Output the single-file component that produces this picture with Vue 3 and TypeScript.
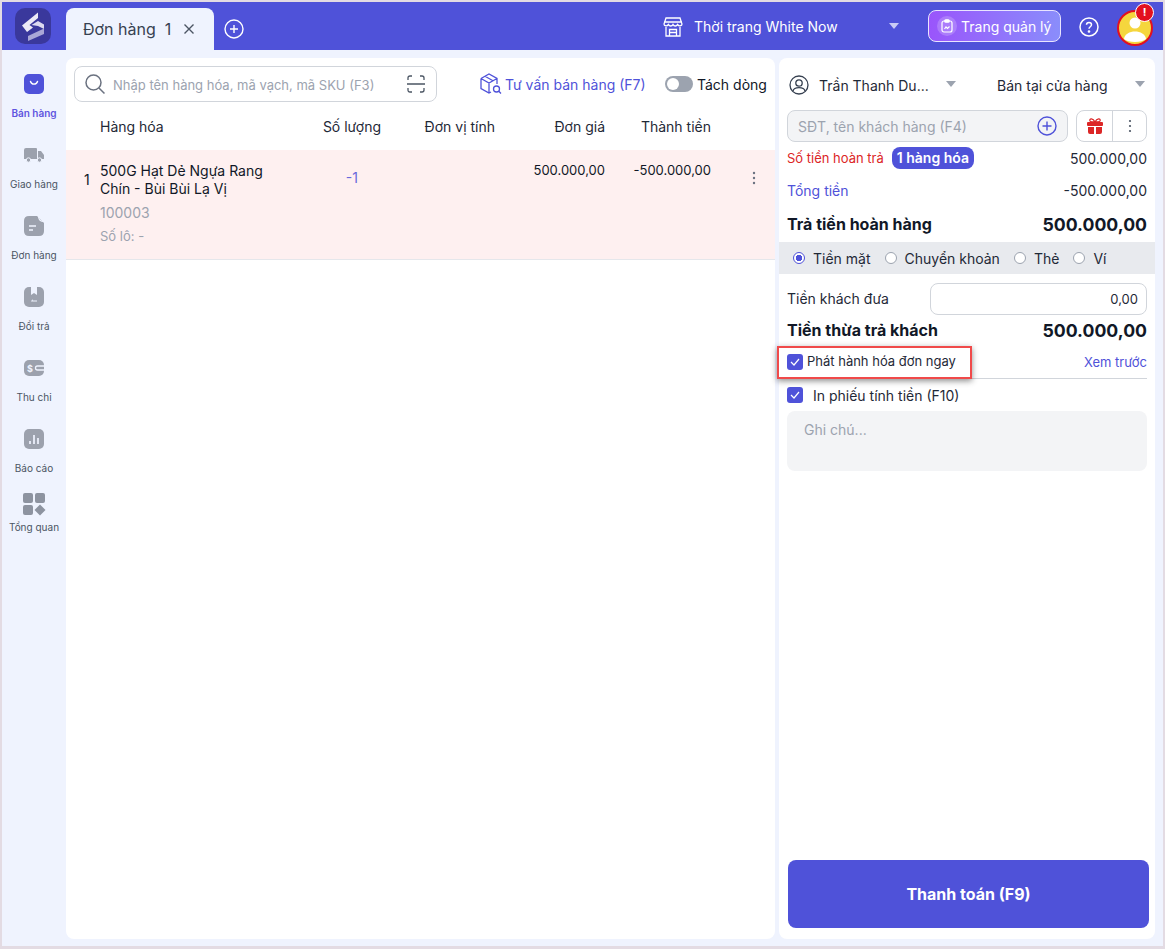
<script setup lang="ts">
interface NavItem { label: string; key: string; active?: boolean }
const nav: NavItem[] = [
  { label: 'Bán hàng', key: 'bag', active: true },
  { label: 'Giao hàng', key: 'truck' },
  { label: 'Đơn hàng', key: 'doc' },
  { label: 'Đổi trả', key: 'ret' },
  { label: 'Thu chi', key: 'wallet' },
  { label: 'Báo cáo', key: 'chart' },
]
const pays = ['Tiền mặt', 'Chuyển khoản', 'Thẻ', 'Ví']
</script>

<template>
  <div class="frame">
    <header class="topbar">
      <svg class="logo" width="36" height="36" viewBox="0 0 36 36">
        <rect width="36" height="36" rx="10" fill="#3a389c" />
        <path d="M7 17.500 L23 4.500 V10 L14.500 17 L18 19.500 L12 24 Z" fill="#eceaf6" />
        <path d="M16.500 17 L23 13 L29 16.500 L29 21 L23 18 Z" fill="#dcdaf0" />
        <path d="M13 28 L29 20.500 V26 L13 33 Z" fill="#a9a7d6" />
      </svg>
      <div class="tab">
        <span>Đơn hàng</span><span class="tab-n">1</span>
        <svg width="12" height="12" viewBox="0 0 12 12" class="tab-x"><path d="M1.500 1.500 L10.500 10.500 M10.500 1.500 L1.500 10.500" stroke="#4b5563" stroke-width="1.400" /></svg>
      </div>
      <svg class="add" width="20" height="20" viewBox="0 0 20 20" fill="none" stroke="#fff" stroke-width="1.400"><circle cx="10" cy="10" r="9" /><path d="M10 6 V14 M6 10 H14" /></svg>
      <div class="store">
        <svg width="20" height="21" viewBox="0 0 20 21" fill="none" stroke="#fff" stroke-width="1.300"><path d="M3 2 H17 L19 8 C19 10 16 10.500 14.500 8.500 C13.500 10.500 11 10.500 10 8.500 C9 10.500 6.500 10.500 5.500 8.500 C4 10.500 1 10 1 8 Z M3 11 V20 H17 V11 M6.500 20 V13.500 H13.500 V20 M6.500 16.500 H13.500 M1 6 H19" /></svg>
        <span class="store-name">Thời trang White Now</span>
        <i class="caret caret-light"></i>
      </div>
      <div class="manage">
        <span class="manage-ic">
          <svg width="12" height="14" viewBox="0 0 12 14" fill="none" stroke="#fff" stroke-width="1.200"><rect x="1" y="2" width="10" height="11" rx="2" /><rect x="3.800" y="0.800" width="4.400" height="2.400" rx="1" fill="#fff" /><path d="M3.500 10 L5 8 L6.500 9.500 L8.500 7.500" /></svg>
        </span>
        Trang quản lý
      </div>
      <svg class="help" width="20" height="20" viewBox="0 0 20 20" fill="none" stroke="#fff" stroke-width="1.500"><circle cx="10" cy="10" r="9" /><path d="M7.500 7.800 C7.500 4.800 12.500 4.800 12.500 7.800 C12.500 9.800 10 9.700 10 11.800" /><circle cx="10" cy="14.500" r="0.600" fill="#fff" /></svg>
      <div class="avatar">
        <svg width="36" height="36" viewBox="0 0 36 36">
          <circle cx="18" cy="18" r="17" fill="#f5d63d" stroke="#e3101f" stroke-width="2" />
          <circle cx="18" cy="13" r="5.500" fill="#fff" />
          <path d="M7 29 C8 19 28 19 29 29 C25 33 11 33 7 29 Z" fill="#fff" />
        </svg>
        <span class="avatar-badge">!</span>
      </div>
    </header>

    <div class="body">
      <nav class="sidenav">
        <div v-for="n in nav" :key="n.key" class="nav-item" :class="{ active: n.active }">
          <svg width="20" height="20" viewBox="0 0 20 20">
            <template v-if="n.key === 'bag'">
              <rect width="20" height="20" rx="5" fill="#4f52d9" />
              <path d="M6.500 7.500 C7.500 11 12.500 11 13.500 7.500" fill="none" stroke="#fff" stroke-width="1.400" stroke-linecap="round" />
            </template>
            <template v-else-if="n.key === 'truck'">
              <path d="M0 5 Q0 3 2 3 H12 Q13 3 13 4 V14 H0 Z M14 6 H17 L20 10 V14 H14 Z" fill="#9ca1ad" />
              <circle cx="4.500" cy="15" r="2.200" fill="#9ca1ad" stroke="#eff3fe" /><circle cx="15.500" cy="15" r="2.200" fill="#9ca1ad" stroke="#eff3fe" />
            </template>
            <template v-else-if="n.key === 'doc'">
              <path d="M5 0 H13 L20 7 V15 Q20 20 15 20 H5 Q0 20 0 15 V5 Q0 0 5 0 Z" fill="#9ca1ad" />
              <path d="M14.500 0.500 Q15 5.500 19.800 5.500" fill="none" stroke="#eff3fe" stroke-width="1.200" />
              <path d="M5 10 H12 M5 14 H9" stroke="#eff3fe" stroke-width="1.500" />
            </template>
            <template v-else-if="n.key === 'ret'">
              <rect width="20" height="20" rx="5" fill="#9ca1ad" />
              <path d="M7 0 H13 V8 L10 6 L7 8 Z" fill="#eff3fe" />
              <path d="M7.500 14 H13 M7.500 14 L9 12.800" stroke="#eff3fe" stroke-width="1" fill="none" />
            </template>
            <template v-else-if="n.key === 'wallet'">
              <rect y="2" width="20" height="16" rx="5" fill="#9ca1ad" />
              <text x="6" y="14" font-size="9" font-weight="700" fill="#eff3fe" text-anchor="middle" font-family="Inter">$</text>
              <path d="M20 8 H13.500 A2 2 0 0 0 13.500 12 H20" fill="none" stroke="#eff3fe" stroke-width="1.300" />
            </template>
            <template v-else>
              <rect width="20" height="20" rx="5" fill="#9ca1ad" />
              <path d="M6 15 V12 M10 15 V6 M14 15 V9" stroke="#eff3fe" stroke-width="1.700" />
            </template>
          </svg>
          <span>{{ n.label }}</span>
        </div>
        <div class="nav-item nav-last">
          <svg width="24" height="24" viewBox="0 0 24 24" fill="#8d93a0">
            <rect x="1" y="1" width="10" height="10" rx="2" /><rect x="13" y="1" width="10" height="10" rx="2" /><rect x="1" y="13" width="10" height="10" rx="2" />
            <path d="M18 12.500 L23.500 18 L18 23.500 L12.500 18 Z" />
          </svg>
          <span>Tổng quan</span>
        </div>
      </nav>

      <main class="left">
        <div class="toolbar">
          <div class="search">
            <svg width="22" height="22" viewBox="0 0 22 22" fill="none" stroke="#6b7280" stroke-width="1.500"><circle cx="9.500" cy="9.500" r="7.500" /><path d="M15 15 L20.500 20.500" /></svg>
            <span class="search-text">Nhập tên hàng hóa, mã vạch, mã SKU (F3)</span>
            <svg width="18" height="18" viewBox="0 0 18 18" fill="none" stroke="#4b5563" stroke-width="1.300"><path d="M1 5 V3 Q1 1 3 1 H5 M13 1 H15 Q17 1 17 3 V5 M17 13 V15 Q17 17 15 17 H13 M5 17 H3 Q1 17 1 15 V13 M0 9 H18" /></svg>
          </div>
          <div class="advise">
            <svg width="22" height="22" viewBox="0 0 22 22" fill="none" stroke="#4f52d9" stroke-width="1.300"><path d="M1 5.500 L9 1 L17 5.500 V11 M1 5.500 V15.500 L9 20 L11 19 M1 5.500 L9 10 L17 5.500 M9 10 V20 M5 3.300 L13 7.800" /><circle cx="16.500" cy="16" r="3" /><path d="M18.800 18.300 L21 20.500" /></svg>
            <span>Tư vấn bán hàng (F7)</span>
          </div>
          <div class="split">
            <span class="toggle"><i></i></span>
            <span>Tách dòng</span>
          </div>
        </div>

        <div class="grid grid-head">
          <div>Hàng hóa</div><div class="r">Số lượng</div><div class="r">Đơn vị tính</div><div class="r">Đơn giá</div><div class="r">Thành tiền</div><div></div>
        </div>

        <div class="grid row">
          <div class="name-cell">
            <span class="idx">1</span>
            <div class="name">500G Hạt Dẻ Ngựa Rang Chín - Bùi Bùi Lạ Vị</div>
            <div class="sku">100003</div>
            <div class="lot">Số lô: -</div>
          </div>
          <div class="r qty">-1</div>
          <div></div>
          <div class="r money">500.000,00</div>
          <div class="r money">-500.000,00</div>
          <div class="more">
            <svg width="4" height="14" viewBox="0 0 4 14" fill="#6b7280"><circle cx="2" cy="2" r="1.200" /><circle cx="2" cy="7" r="1.200" /><circle cx="2" cy="12" r="1.200" /></svg>
          </div>
        </div>
      </main>

      <aside class="right">
        <div class="selects">
          <svg width="20" height="20" viewBox="0 0 20 20" fill="none" stroke="#374151" stroke-width="1.300"><circle cx="10" cy="10" r="9" /><circle cx="10" cy="8" r="3.200" /><path d="M4 16 C5 11.500 15 11.500 16 16" /></svg>
          <span class="seller">Trần Thanh Du...</span>
          <i class="caret"></i>
          <span class="channel">Bán tại cửa hàng</span>
          <i class="caret"></i>
        </div>

        <div class="customer">
          <div class="cust-input">
            <span>SĐT, tên khách hàng (F4)</span>
            <svg width="20" height="20" viewBox="0 0 20 20" fill="none" stroke="#4f52d9" stroke-width="1.400"><circle cx="10" cy="10" r="9" /><path d="M10 5.500 V14.500 M5.500 10 H14.500" /></svg>
          </div>
          <div class="cust-btns">
            <span class="cbtn">
              <svg width="16" height="16" viewBox="0 0 16 16" fill="#dc2626"><rect x="0" y="4" width="16" height="4" rx="1" /><path d="M1 9 H7 V16 H3 Q1 16 1 14 Z M9 9 H15 V14 Q15 16 13 16 H9 Z" /><path d="M8 4 C6 0 2 0 3 3 Q3.500 4 8 4 C10 0 14 0 13 3 Q12.500 4 8 4" fill="none" stroke="#dc2626" stroke-width="1.300" /></svg>
            </span>
            <span class="cbtn cbtn-more">
              <svg width="4" height="14" viewBox="0 0 4 14" fill="#4b5563"><circle cx="2" cy="2" r="1.100" /><circle cx="2" cy="7" r="1.100" /><circle cx="2" cy="12" r="1.100" /></svg>
            </span>
          </div>
        </div>

        <div class="line refund">
          <span class="refund-l">Số tiền hoàn trả</span>
          <span class="pill">1 hàng hóa</span>
          <span class="val">500.000,00</span>
        </div>
        <div class="line total">
          <span class="blue">Tổng tiền</span>
          <span class="val">-500.000,00</span>
        </div>
        <div class="line strong s1">
          <span>Trả tiền hoàn hàng</span>
          <span class="big">500.000,00</span>
        </div>

        <div class="pay">
          <label v-for="(p, i) in pays" :key="p" class="pay-opt">
            <span class="radio" :class="{ on: i === 0 }"></span>{{ p }}
          </label>
        </div>

        <div class="line given">
          <span class="given-label">Tiền khách đưa</span>
          <span class="given-input">0,00</span>
        </div>
        <div class="line strong s2">
          <span>Tiền thừa trả khách</span>
          <span class="big">500.000,00</span>
        </div>

        <div class="invoice">
          <span class="check">
            <svg width="10" height="8" viewBox="0 0 10 8" fill="none" stroke="#fff" stroke-width="1.200"><path d="M1 4 L4 7 L9 1" /></svg>
          </span>
          <span class="inv-text">Phát hành hóa đơn ngay</span>
          <span class="preview">Xem trước</span>
          <div class="highlight"></div>
        </div>

        <div class="print">
          <span class="check">
            <svg width="10" height="8" viewBox="0 0 10 8" fill="none" stroke="#fff" stroke-width="1.200"><path d="M1 4 L4 7 L9 1" /></svg>
          </span>
          <span>In phiếu tính tiền (F10)</span>
        </div>

        <div class="note">Ghi chú...</div>

        <button class="paybtn">Thanh toán (F9)</button>
      </aside>
    </div>
  </div>
</template>

<style>
html, body { margin: 0; padding: 0; background: #e3dbe3; }
</style>

<style scoped>
.frame {
  box-sizing: border-box;
  width: 1165px;
  height: 949px;
  padding: 2px 2px 3px 2px;
  background: #e3dbe3;
  display: flex;
  flex-direction: column;
  font-family: Inter, "Noto Sans", sans-serif;
  font-size: 14px;
  color: #111827;
  overflow: hidden;
}
.topbar {
  height: 48px;
  flex: none;
  background: #4f52d9;
  display: flex;
  align-items: flex-start;
  position: relative;
}
.logo { margin: 6px 0 0 13px; flex: none; }
.tab {
  margin: 6px 0 0 15px;
  width: 148px;
  height: 42px;
  box-sizing: border-box;
  padding: 0 0 0 17px;
  background: #eff3fe;
  border-radius: 8px 8px 0 0;
  display: flex;
  align-items: center;
  font-size: 16px;
  color: #374151;
}
.tab-n { margin-left: 9px; }
.tab-x { margin-left: 12px; }
.add { margin: 17px 0 0 10px; flex: none; }
.store {
  margin: 13px 0 0 419px;
  height: 22px;
  display: flex;
  align-items: center;
  color: #fff;
  flex: none;
}
.store-name { margin-left: 11px; width: 195px; font-size: 14px; white-space: nowrap; }
.caret {
  display: inline-block;
  width: 0;
  height: 0;
  border-left: 5px solid transparent;
  border-right: 5px solid transparent;
  border-top: 6px solid #9ca3af;
  flex: none;
}
.selects .caret { margin-top: -2px; }
.caret-light { border-top-color: #c9cbf5; }
.manage {
  margin: 8px 0 0 29px;
  box-sizing: border-box;
  width: 133px;
  height: 32px;
  border: 1px solid #e9e4ff;
  border-radius: 8px;
  background: linear-gradient(90deg, #9a55fb, #8a8dfb);
  display: flex;
  align-items: center;
  padding-left: 8px;
  color: #fff;
  font-size: 14px;
  white-space: nowrap;
  flex: none;
}
.manage-ic {
  width: 20px;
  height: 20px;
  border-radius: 50%;
  background: rgba(255, 255, 255, 0.2);
  display: flex;
  align-items: center;
  justify-content: center;
  margin-right: 4px;
}
.help { margin: 15px 0 0 18px; flex: none; }
.avatar { margin: 8px 0 0 18px; position: relative; width: 36px; height: 36px; flex: none; }
.avatar-badge {
  position: absolute;
  left: 18px;
  top: -7px;
  width: 17px;
  height: 17px;
  border: 1.500px solid #fff;
  border-radius: 50%;
  background: #e3101f;
  color: #fff;
  font-size: 11px;
  font-weight: 700;
  line-height: 17px;
  text-align: center;
}
.body {
  flex: 1;
  min-height: 0;
  display: flex;
  background: #eff3fe;
  padding: 8px 8px 7px 0;
}
.sidenav { width: 64px; flex: none; display: flex; flex-direction: column; align-items: center; padding-top: 16px; }
.nav-item {
  display: flex;
  flex-direction: column;
  align-items: center;
  height: 71px;
  font-size: 10px;
  color: #4b5563;
  white-space: nowrap;
}
.nav-item svg { flex: none; }
.nav-item span { margin-top: 12px; line-height: 14px; }
.nav-item.active span { color: #5f55e0; font-weight: 600; }
.nav-last { margin-top: -8px; }
.nav-item.nav-last span { margin-top: 4px; }
.left {
  width: 709px;
  flex: none;
  background: #fff;
  border-radius: 8px;
  overflow: hidden;
}
.toolbar { display: flex; align-items: center; padding: 8px 8px 0 8px; height: 36px; }
.search {
  box-sizing: border-box;
  width: 363px;
  height: 36px;
  border: 1px solid #d1d5db;
  border-radius: 8px;
  display: flex;
  align-items: center;
  padding: 0 11px 0 9px;
  flex: none;
}
.search-text { margin-left: 7px; flex: 1; font-size: 13px; line-height: 18px; padding-top: 2px; color: #9ca3af; white-space: nowrap; }
.advise { margin-left: 43px; display: flex; align-items: center; color: #4f52d9; white-space: nowrap; width: 185px; flex: none; }
.advise span { margin-left: 3px; }
.split { display: flex; align-items: center; white-space: nowrap; }
.toggle { width: 28px; height: 16px; background: #9ca3af; border-radius: 8px; display: block; position: relative; margin-right: 4px; }
.toggle i { position: absolute; left: 2px; top: 2px; width: 12px; height: 12px; background: #fff; border-radius: 50%; }
.grid { display: grid; grid-template-columns: 200px 81px 114px 110px 106px 1fr; padding-left: 34px; }
.grid-head { height: 48px; align-items: center; box-sizing: border-box; color: #1f2937; }
.r { text-align: right; }
.money { font-size: 13px; }
.row {
  height: 110px;
  box-sizing: border-box;
  background: #fef0f0;
  border-bottom: 1px solid #e5e7eb;
  padding-top: 12px;
}
.name-cell { position: relative; }
.idx { position: absolute; left: -16px; top: 9px; }
.name { width: 175px; line-height: 18px; }
.sku { margin-top: 5px; line-height: 20px; color: #9ca3af; }
.lot { margin-top: 3px; line-height: 20px; font-size: 13px; color: #9ca3af; }
.qty { color: #4f52d9; padding-right: 23px; padding-top: 7px; opacity: 0.85; }
.more { text-align: right; padding: 9px 19px 0 0; }
.right {
  margin-left: 4px;
  width: 376px;
  flex: none;
  background: #fff;
  border-radius: 8px;
  padding: 17px 8px 11px 8px;
  box-sizing: border-box;
  display: flex;
  flex-direction: column;
}
.selects { display: flex; align-items: center; height: 20px; padding-left: 2px; white-space: nowrap; color: #1f2937; }
.seller { margin-left: 10px; width: 127px; }
.channel { margin-left: 41px; width: 138px; }
.customer { display: flex; margin-top: 15px; height: 32px; gap: 8px; }
.cust-input {
  box-sizing: border-box;
  width: 281px;
  border: 1px solid #d1d5db;
  background: #f3f4f6;
  border-radius: 8px;
  display: flex;
  align-items: center;
  justify-content: space-between;
  padding: 0 10px;
  color: #9ca3af;
}
.cust-btns { box-sizing: border-box; width: 71px; border: 1px solid #d1d5db; border-radius: 8px; display: flex; }
.cbtn { flex: 1; display: flex; align-items: center; justify-content: center; }
.cbtn-more { flex: none; width: 33px; border-left: 1px solid #d1d5db; }
.line { display: flex; align-items: center; justify-content: space-between; }
.refund { margin-top: 5px; height: 22px; }
.refund-l { color: #dc2626; font-size: 13px; margin-top: -1px; }
.pill {
  margin-left: 8px;
  margin-right: auto;
  height: 22px;
  line-height: 22px;
  padding: 0 5px;
  border-radius: 8px;
  background: #4f52d9;
  color: #fff;
  font-weight: 600;
  font-size: 14px;
  white-space: nowrap;
}
.val { color: #1f2937; }
.total { margin-top: 11px; height: 20px; }
.blue { color: #4f52d9; }
.strong { font-weight: 700; font-size: 16px; }
.big { font-size: 17.700px; }
.s1 { margin-top: 12px; height: 24px; }
.pay {
  margin: 6px -8px 0;
  height: 32px;
  background: #e8eaee;
  display: flex;
  align-items: center;
  padding-left: 14px;
}
.pay-opt { display: flex; align-items: center; margin-right: 14px; color: #1f2937; white-space: nowrap; }
.radio {
  box-sizing: border-box;
  width: 12px;
  height: 12px;
  border-radius: 50%;
  background: #fff;
  border: 1px solid #9ca3af;
  margin-right: 8px;
}
.radio.on { border-color: #4f52d9; background: radial-gradient(circle, #4f52d9 0 3px, #fff 3.500px); }
.given { margin-top: 9px; height: 32px; color: #1f2937; }
.given-label { margin-top: -1px; }
.given-input {
  box-sizing: border-box;
  width: 217px;
  height: 32px;
  border: 1px solid #d1d5db;
  border-radius: 8px;
  text-align: right;
  padding: 0 8px;
  line-height: 30px;
  font-size: 13px;
}
.s2 { margin-top: 2px; height: 26px; }
.invoice {
  position: relative;
  margin-top: 11px;
  box-sizing: border-box;
  border-bottom: 1px solid #d1d5db;
  display: flex;
  align-items: flex-start;
  height: 25px;
  font-size: 13px;
}
.check {
  width: 16px;
  height: 16px;
  border-radius: 3px;
  background: #4f52d9;
  display: flex;
  align-items: center;
  justify-content: center;
  flex: none;
}
.inv-text { margin-left: 4px; line-height: 15px; color: #1f2937; }
.preview { margin-left: auto; color: #4f52d9; line-height: 17px; }
.highlight {
  position: absolute;
  left: -10px;
  top: -8px;
  width: 195px;
  height: 33px;
  box-sizing: border-box;
  border: 2px solid #f04a4a;
  box-shadow: 0 2px 6px rgba(0, 0, 0, 0.45);
}
.print { margin-top: 8px; height: 16px; display: flex; align-items: center; color: #1f2937; }
.print span:last-child { margin-left: 10px; }
.note {
  margin-top: 8px;
  height: 60px;
  box-sizing: border-box;
  background: #f3f4f6;
  border-radius: 8px;
  padding: 10px 17px;
  color: #9ca3af;
}
.paybtn {
  margin-top: auto;
  height: 68px;
  width: 361px;
  margin-left: 1px;
  flex: none;
  border: none;
  border-radius: 8px;
  background: #4f52d9;
  color: #fff;
  font: 700 16px Inter, sans-serif;
}
</style>
